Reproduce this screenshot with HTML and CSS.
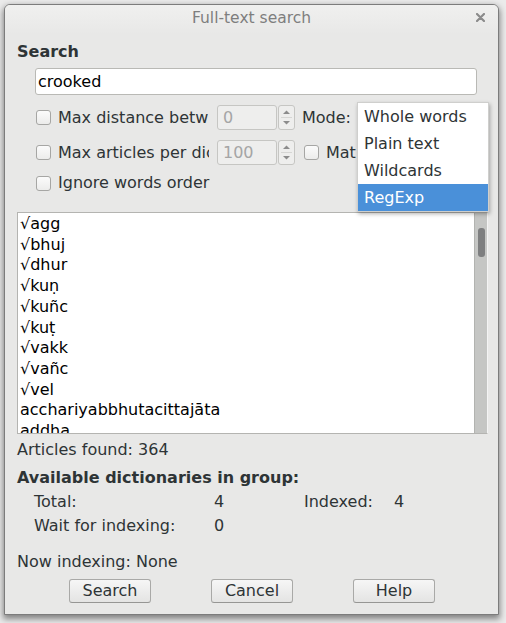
FILE: index.html
```html
<!DOCTYPE html>
<html>
<head>
<meta charset="utf-8">
<link rel="stylesheet" href="styles.css">
</head>
<body>
<div class="window">
  <div class="titlebar">
    <span class="title">Full-text search</span>
    <svg class="close" width="9" height="9" viewBox="0 0 9 9"><path d="M1 1L8 8M8 1L1 8" stroke="#8b8b8b" stroke-width="2.2" stroke-linecap="round"/></svg>
  </div>
  <div class="content">
    <div class="section-label">Search</div>
    <div class="search-input">crooked</div>

    <div class="opt-row">
      <span class="check"></span>
      <span class="opt-label">Max distance betw</span>
      <div class="spin">
        <div class="spin-field">0</div>
        <div class="spin-btns">
          <svg width="17" height="25" viewBox="0 0 17 25"><path d="M5 9L8.5 5.5L12 9Z" fill="#8c8c8c"/><path d="M3 12.5H14" stroke="#d6d6d4"/><path d="M5 16L8.5 19.5L12 16Z" fill="#8c8c8c"/></svg>
        </div>
      </div>
      <span class="mode-label">Mode:</span>
    </div>

    <div class="opt-row">
      <span class="check"></span>
      <span class="opt-label">Max articles per dic</span>
      <div class="spin">
        <div class="spin-field">100</div>
        <div class="spin-btns">
          <svg width="17" height="25" viewBox="0 0 17 25"><path d="M5 9L8.5 5.5L12 9Z" fill="#8c8c8c"/><path d="M3 12.5H14" stroke="#d6d6d4"/><path d="M5 16L8.5 19.5L12 16Z" fill="#8c8c8c"/></svg>
        </div>
      </div>
      <span class="check check-match"></span>
      <span class="match-label">Mat</span>
    </div>

    <div class="opt-row row-short">
      <span class="check"></span>
      <span class="plain-label">Ignore words order</span>
    </div>

    <div class="results">
      <div class="list">
        <div>√agg</div>
        <div>√bhuj</div>
        <div>√dhur</div>
        <div>√kuṇ</div>
        <div>√kuñc</div>
        <div>√kuṭ</div>
        <div>√vakk</div>
        <div>√vañc</div>
        <div>√vel</div>
        <div>acchariyabbhutacittajāta</div>
        <div>addha</div>
      </div>
      <div class="scrollbar"><div class="thumb"></div></div>
    </div>

    <div class="found">Articles found: 364</div>
    <div class="section-label dict-label">Available dictionaries in group:</div>
    <div class="stats">
      <span>Total:</span><span>4</span><span>Indexed:</span><span>4</span>
      <span>Wait for indexing:</span><span>0</span><span></span><span></span>
    </div>
    <div class="now">Now indexing: None</div>
    <div class="buttons">
      <div class="btn">Search</div>
      <div class="btn">Cancel</div>
      <div class="btn">Help</div>
    </div>
  </div>

  <div class="popup">
    <div class="item">Whole words</div>
    <div class="item">Plain text</div>
    <div class="item">Wildcards</div>
    <div class="item selected">RegExp</div>
  </div>
</div>
</body>
</html>
```

FILE: styles.css
```css
html, body {
  margin: 0;
  padding: 0;
}
body {
  background: #ebebeb;
  width: 506px;
  height: 623px;
  overflow: hidden;
  font-family: "DejaVu Sans", sans-serif;
  font-size: 16px;
  color: #2e3436;
}
.window {
  position: relative;
  box-sizing: border-box;
  margin: 4px 0 0 4px;
  width: 495px;
  height: 611px;
  border: 1px solid #7c7c7c;
  border-radius: 6px 6px 0 0;
  background: #e8e8e7;
  box-shadow: 0 3px 6px 1px rgba(0, 0, 0, 0.45);
}
.titlebar {
  display: grid;
  grid-template-columns: 1fr auto 1fr;
  align-items: start;
  height: 29px;
  padding-top: 1px;
  box-sizing: border-box;
  border-radius: 5px 5px 0 0;
  background: linear-gradient(#f0f0ef, #e8e8e7);
}
.title {
  grid-column: 2;
  font-size: 15.5px;
  line-height: 25px;
  color: #7e7e7e;
}
.close {
  grid-column: 3;
  justify-self: end;
  margin-right: 13px;
  margin-top: 7px;
}
.content {
  padding: 0 10px 0 12px;
}
.section-label {
  margin-top: 8px;
  font-weight: bold;
  line-height: 20px;
}
.search-input {
  box-sizing: border-box;
  margin: 6px 0 0 18px;
  width: 442px;
  height: 27px;
  padding: 0 2px;
  line-height: 25px;
  background: #fff;
  border: 1px solid #b9b9b5;
  border-radius: 3px;
  color: #000;
}
.opt-row {
  display: flex;
  align-items: center;
  height: 25px;
  margin-top: 10px;
  padding-left: 19px;
  line-height: 20px;
  white-space: nowrap;
}
.row-short {
  height: 20px;
  margin-top: 8px;
}
.check {
  box-sizing: border-box;
  flex: none;
  width: 15px;
  height: 15px;
  border: 1px solid #a6a6a4;
  border-radius: 3px;
  background: linear-gradient(#fbfbfb, #ececeb);
  margin-right: 7px;
}
.opt-label {
  width: 151px;
  overflow: hidden;
}
.spin {
  display: flex;
  margin-left: 8px;
  gap: 1px;
}
.spin-field {
  box-sizing: border-box;
  width: 60px;
  height: 25px;
  padding: 0 5px;
  line-height: 23px;
  background: #eeeeed;
  border: 1px solid #c6c6c3;
  border-radius: 3px;
  color: #a5a5a5;
}
.spin-btns {
  box-sizing: border-box;
  width: 17px;
  height: 25px;
  background: #eeeeed;
  border: 1px solid #c6c6c3;
  border-radius: 3px;
  overflow: hidden;
}
.spin-btns svg {
  display: block;
  margin: -1px 0 0 -1px;
}
.mode-label {
  margin-left: 7px;
}
.check-match {
  margin-left: 9px;
}
.results {
  display: flex;
  box-sizing: border-box;
  margin-top: 19px;
  width: 471px;
  height: 222px;
  border: 1px solid #b4b4b1;
  border-right-color: #f4f4f4;
  background: #fff;
}
.list {
  flex: 1;
  padding: 1px 0 0 2px;
  line-height: 20.7px;
  overflow: hidden;
  color: #000;
}
.scrollbar {
  flex: none;
  width: 13px;
  background: #c5c6c4;
  border-left: 1px solid #b2b3b0;
  box-sizing: border-box;
  padding: 15px 0 0 3px;
}
.thumb {
  width: 7px;
  height: 29px;
  border-radius: 3px;
  background: #7e7f80;
}
.found {
  margin-top: 6px;
  line-height: 20px;
}
.dict-label {
  margin-top: 8px;
}
.stats {
  display: grid;
  grid-template-columns: 180px 90px 90px auto;
  row-gap: 4px;
  margin: 4px 0 0 17px;
  line-height: 20px;
}
.now {
  margin-top: 16px;
  line-height: 20px;
}
.buttons {
  display: flex;
  justify-content: center;
  gap: 60px;
  margin-top: 7px;
  padding-right: 1px;
}
.btn {
  box-sizing: border-box;
  width: 82px;
  height: 24px;
  line-height: 22px;
  text-align: center;
  border: 1px solid #a9a9a7;
  border-bottom-color: #969694;
  border-radius: 3px;
  background: linear-gradient(#f6f6f6, #e4e4e3);
}
.popup {
  position: absolute;
  left: 352px;
  top: 97px;
  box-sizing: border-box;
  width: 132px;
  height: 110px;
  background: #fff;
  border: 1px solid #cfcfcd;
  box-shadow: 1px 2px 4px rgba(0, 0, 0, 0.3);
}
.item {
  height: 27px;
  line-height: 27px;
  padding-left: 6px;
  color: #2e3436;
}
.item.selected {
  background: #4a90d9;
  color: #fff;
}
```
